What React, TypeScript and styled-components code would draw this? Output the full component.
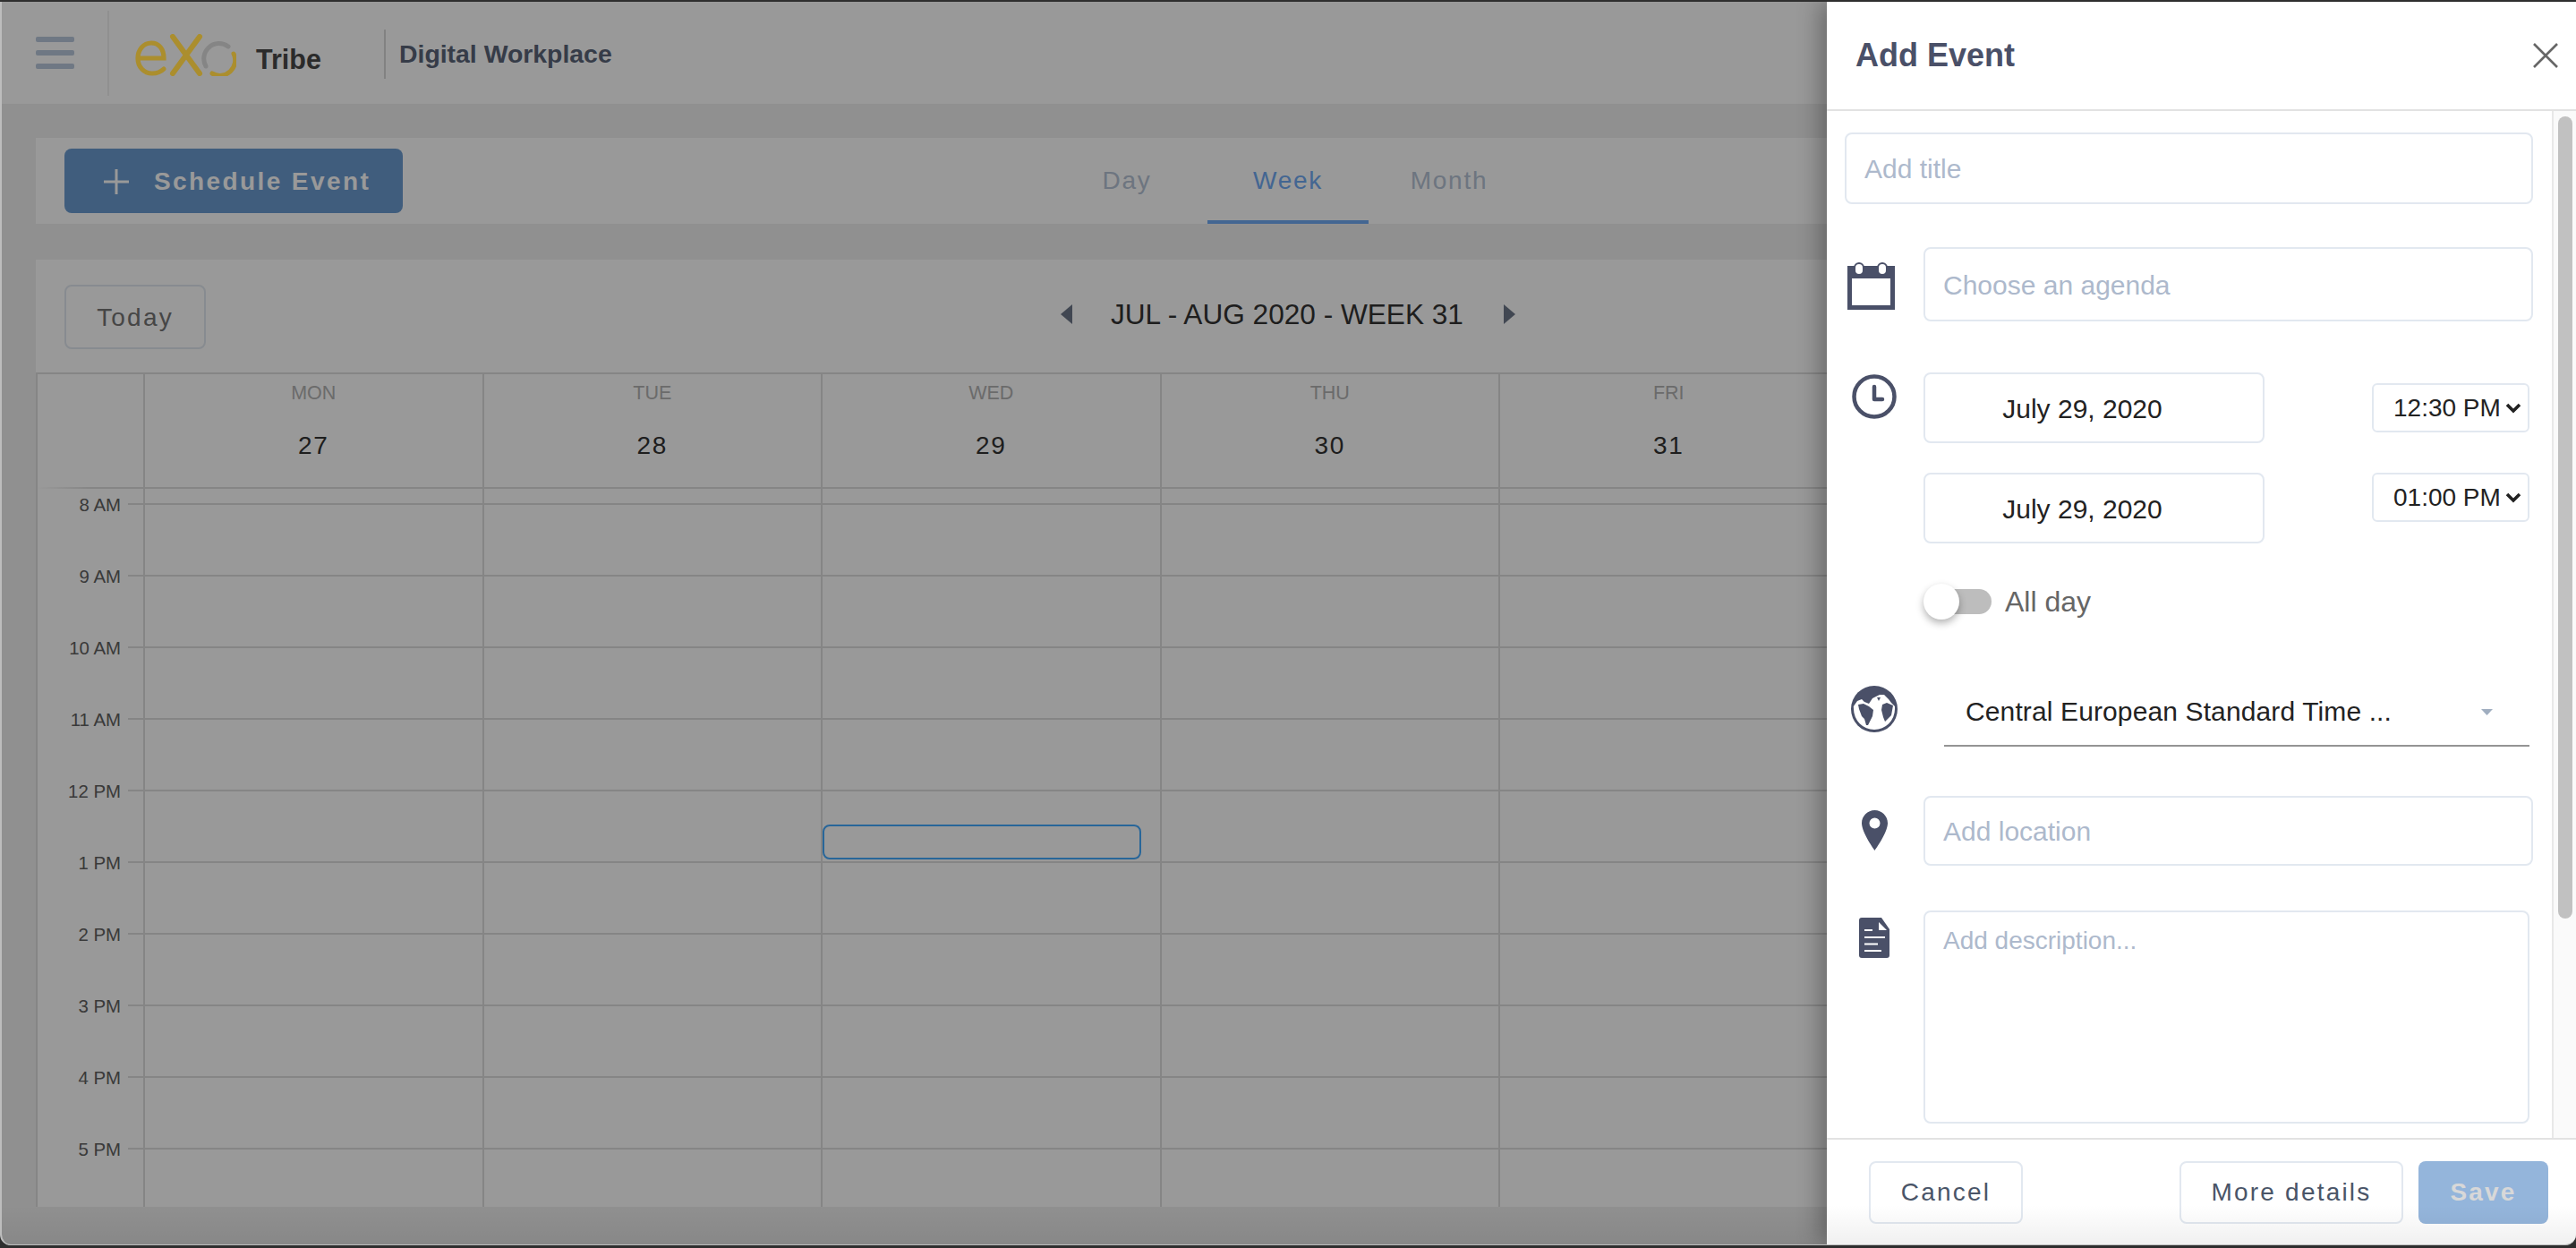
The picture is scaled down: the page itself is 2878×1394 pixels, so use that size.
import styled, { createGlobalStyle } from 'styled-components';

const GlobalStyle = createGlobalStyle`
  html, body {
    margin: 0;
    padding: 0;
    background: #2e2e2e;
    overflow: hidden;
  }
  * {
    box-sizing: border-box;
  }
  body, input, textarea, button {
    font-family: "Liberation Sans", Arial, sans-serif;
  }
`;

const Screen = styled.div`
  width: 2878px;
  height: 1394px;
  padding-top: 2px;
`;

const Window = styled.div`
  position: relative;
  width: 2878px;
  height: 1389px;
  background: #f1f1f1;
  border-left: 2px solid #bdbdbd;
  border-bottom: 1px solid #bdbdbd;
  border-radius: 0 0 12px 12px;
  overflow: hidden;
`;

const Overlay = styled.div`
  position: absolute;
  inset: 0;
  z-index: 1;
  background: rgba(0, 0, 0, 0.4);
`;

const BottomShade = styled.div`
  position: absolute;
  left: 0;
  right: 0;
  bottom: 0;
  height: 44px;
  z-index: 4;
  pointer-events: none;
  background: linear-gradient(to bottom, rgba(0, 0, 0, 0), rgba(0, 0, 0, 0.06));
`;

/* top bar */
const TopBar = styled.header`
  height: 114px;
  background: #fff;
  display: flex;
  align-items: center;
`;

const Burger = styled.div`
  width: 120px;
  height: 95px;
  padding-left: 38px;
  border-right: 2px solid #f0f0f0;
  display: flex;
  flex-direction: column;
  justify-content: center;
  gap: 9px;
`;

const BurgerBar = styled.span`
  width: 43px;
  height: 6px;
  border-radius: 2px;
  background: #bac9dc;
`;

const Logo = styled.svg`
  position: relative;
  z-index: 2;
  width: 114px;
  height: 47px;
  margin: 4px 0 0 28px;
`;

const Tribe = styled.span`
  margin: 14px 0 0 22px;
  width: 143px;
  font-size: 30.5px;
  font-weight: 700;
  color: #484848;
`;

const BrandName = styled.div`
  height: 55px;
  margin-top: 2px;
  padding-left: 15px;
  border-left: 2px solid #d9d9d9;
  display: flex;
  align-items: center;
  font-size: 28.4px;
  font-weight: 700;
  color: #5a6479;
`;

/* page under the drawer */
const Main = styled.main`
  width: 2836px;
  margin-left: 38px;
  padding-top: 38px;
`;

const ViewBar = styled.section`
  position: relative;
  width: 2798px;
  height: 96px;
  background: #fff;
  padding: 12px 32px;
  display: grid;
  grid-template-columns: 1fr auto 1fr;
`;

const ScheduleButton = styled.button`
  width: 378px;
  height: 72px;
  border: 0;
  border-radius: 8px;
  background: #6b9bd0;
  color: #fff;
  font-size: 28px;
  font-weight: 700;
  letter-spacing: 2.4px;
  padding: 2px 0 0 44px;
  display: flex;
  align-items: center;
  gap: 28px;
`;

const Tabs = styled.nav`
  display: flex;
  margin-top: -12px;
`;

const Tab = styled.div<{ $active?: boolean }>`
  width: 180px;
  height: 96px;
  padding-top: 4px;
  display: flex;
  align-items: center;
  justify-content: center;
  font-size: 28px;
  letter-spacing: 1.7px;
  color: ${(p) => (p.$active ? '#71aaf3' : '#b6c3d5')};
  border-bottom: 4px solid ${(p) => (p.$active ? '#71aaf3' : 'transparent')};
`;

const CalendarCard = styled.section`
  width: 2798px;
  height: 1058px;
  margin-top: 40px;
  background: #fff;
  overflow: hidden;
`;

const CalendarHead = styled.div`
  height: 128px;
  padding: 28px 32px 0;
  display: grid;
  grid-template-columns: 1fr auto 1fr;
  border-bottom: 2px solid #dedede;
`;

const TodayButton = styled.button`
  width: 158px;
  height: 72px;
  padding: 2px 0 0;
  border: 2px solid #e2e8f0;
  border-radius: 8px;
  background: #fff;
  color: #757575;
  font-size: 28px;
  letter-spacing: 2.2px;
`;

const WeekNav = styled.div`
  height: 64px;
  padding-top: 2px;
  display: flex;
  align-items: center;
  gap: 42px;
  font-size: 31.6px;
  color: #333;
`;

const WeekTitle = styled.span`
  width: 396px;
  white-space: nowrap;
`;

const GridFrame = styled.div`
  border-left: 2px solid #dedede;
`;

const DayHead = styled.div`
  height: 128px;
  display: grid;
  grid-template-columns: 118px repeat(7, 378.5px);
  border-bottom: 2px solid;
  border-image: linear-gradient(to right, transparent, #dedede 60px) 1;
`;

const DayHeadCell = styled.div`
  border-left: 2px solid #dedede;
  display: flex;
  flex-direction: column;
  align-items: center;
  padding-top: 8px;
`;

const DayName = styled.span`
  font-size: 21.5px;
  line-height: 26px;
  color: #b2b2b2;
`;

const DayNumber = styled.span`
  margin-top: 28px;
  font-size: 28px;
  line-height: 36px;
  letter-spacing: 1.6px;
  color: #333;
`;

const GridBody = styled.div`
  display: flex;
`;

const TimeAxis = styled.div`
  width: 118px;
  flex: none;
  padding-top: 16px;
`;

const HourSlot = styled.div`
  height: 80px;
  display: flex;
  justify-content: flex-end;
  align-items: flex-start;
  gap: 8px;
`;

const HourLabel = styled.span`
  margin-top: -10px;
  font-size: 20.4px;
  line-height: 24px;
  color: #616161;
`;

const HourTick = styled.span`
  width: 17px;
  height: 2px;
  background: #dedede;
`;

const Hours = styled.div`
  flex: none;
`;

const TopSpacer = styled.div`
  height: 16px;
  display: grid;
  grid-template-columns: repeat(7, 378.5px);
`;

const HourRow = styled.div`
  height: 80px;
  display: grid;
  grid-template-columns: repeat(7, 378.5px);
  border-top: 2px solid #dedede;
`;

const HourCell = styled.div`
  position: relative;
  border-left: 2px solid #dedede;
`;

const DraftEvent = styled.div`
  position: absolute;
  top: 37px;
  left: 0;
  width: 356px;
  height: 39px;
  border: 2px solid #43aaff;
  border-radius: 8px;
`;

/* drawer */
const Drawer = styled.aside`
  position: absolute;
  top: 0;
  right: 0;
  bottom: 0;
  width: 837px;
  z-index: 3;
  background: #fff;
  box-shadow: -8px 0 24px rgba(0, 0, 0, 0.3);
  display: flex;
  flex-direction: column;
`;

const DrawerHead = styled.div`
  height: 122px;
  flex: none;
  padding: 0 20px 0 32px;
  border-bottom: 2px solid #e2e2e2;
  display: flex;
  align-items: center;
  justify-content: space-between;
`;

const DrawerTitle = styled.h2`
  margin: 0;
  font-size: 36px;
  font-weight: 700;
  color: #4a5068;
`;

const DrawerBody = styled.div`
  flex: 1;
  min-height: 0;
  display: flex;
`;

const Form = styled.div`
  width: 810px;
  padding: 24px 21px 0 20px;
  overflow: hidden;
`;

const ScrollTrack = styled.div`
  flex: 1;
  background: #fafafa;
  border-left: 2px solid #e8e8e8;
  padding: 6px 0 0 5px;
`;

const ScrollThumb = styled.div`
  width: 16px;
  height: 896px;
  border-radius: 8px;
  background: #c1c1c1;
`;

const Row = styled.div<{ $after: number }>`
  display: flex;
  align-items: flex-start;
  margin-bottom: ${(p) => p.$after}px;
`;

const IconCell = styled.div<{ $top: number }>`
  width: 66px;
  margin-right: 22px;
  padding-top: ${(p) => p.$top}px;
  flex: none;
  display: flex;
  justify-content: center;
  color: #4a5068;
`;

const CalendarSvg = styled.svg`
  margin-left: -7px;
`;

const Control = styled.div`
  flex: 1;
  min-width: 0;
`;

const TextField = styled.input<{ $h: number; $center?: boolean }>`
  display: block;
  width: 100%;
  height: ${(p) => p.$h}px;
  padding: ${(p) => (p.$center ? '2px 26px 0 0' : '2px 0 0 20px')};
  border: 2px solid #e2e8f0;
  border-radius: 8px;
  outline: none;
  background: #fff;
  font-size: 30px;
  color: #222;
  text-align: ${(p) => (p.$center ? 'center' : 'left')};
  &::placeholder {
    color: #adb9cc;
    opacity: 1;
  }
`;

const Description = styled.textarea`
  display: block;
  width: 677px;
  height: 238px;
  padding: 16px 20px;
  border: 2px solid #e2e8f0;
  border-radius: 8px;
  outline: none;
  resize: none;
  font-size: 28px;
  &::placeholder {
    color: #adb9cc;
    opacity: 1;
  }
`;

const DateLine = styled.div<{ $selectTop: number }>`
  display: flex;
  justify-content: space-between;
  align-items: flex-start;
  padding-right: 4px;
  margin-bottom: 33px;
  & > div {
    margin-top: ${(p) => p.$selectTop}px;
  }
`;

const DateBox = styled.span`
  width: 381px;
  flex: none;
`;

const TimeSelect = styled.div`
  width: 176px;
  height: 55px;
  padding: 0 7px 0 22px;
  border: 2px solid #e2e8f0;
  border-radius: 6px;
  display: flex;
  align-items: center;
  justify-content: space-between;
  font-size: 28px;
  color: #222;
`;

const ToggleLine = styled.div`
  height: 40px;
  margin-top: 45px;
  display: flex;
  align-items: center;
  gap: 15px;
  font-size: 32px;
  color: #666;
`;

const Toggle = styled.div`
  position: relative;
  width: 76px;
  height: 40px;
  display: flex;
  align-items: center;
  justify-content: flex-end;
`;

const ToggleTrack = styled.span`
  width: 62px;
  height: 28px;
  border-radius: 14px;
  background: #bdbdbd;
`;

const ToggleKnob = styled.span`
  position: absolute;
  left: 0;
  top: 0;
  width: 40px;
  height: 40px;
  border-radius: 50%;
  background: #fff;
  box-shadow: 0 4px 8px rgba(0, 0, 0, 0.3);
`;

const ZoneSelect = styled.div`
  height: 68px;
  margin: 0 4px 0 23px;
  padding: 0 41px 8px 24px;
  border-bottom: 2px solid #949494;
  display: flex;
  align-items: center;
  justify-content: space-between;
  font-size: 30px;
  letter-spacing: 0.12px;
  color: #222;
`;

const DrawerFoot = styled.div`
  height: 119px;
  flex: none;
  padding: 24px 31px 0 47px;
  border-top: 2px solid #e2e2e2;
  display: flex;
  justify-content: space-between;
`;

const FootGroup = styled.div`
  display: flex;
  gap: 17px;
`;

const FootButton = styled.button<{ $w: number }>`
  width: ${(p) => p.$w}px;
  height: 70px;
  border: 2px solid #e2e8f0;
  border-radius: 8px;
  background: #fff;
  color: #4a5568;
  font-size: 28px;
  letter-spacing: 2.2px;
`;

const SaveButton = styled.button`
  width: 145px;
  height: 70px;
  border: 0;
  border-radius: 8px;
  background: #94b5db;
  color: #d8d8d8;
  font-size: 28px;
  font-weight: 700;
  letter-spacing: 2.2px;
`;

const days = [
  { name: 'MON', date: '27' },
  { name: 'TUE', date: '28' },
  { name: 'WED', date: '29' },
  { name: 'THU', date: '30' },
  { name: 'FRI', date: '31' },
  { name: 'SAT', date: '1' },
  { name: 'SUN', date: '2' },
];

const hours = ['8 AM', '9 AM', '10 AM', '11 AM', '12 PM', '1 PM', '2 PM', '3 PM', '4 PM', '5 PM'];

const CalendarIcon = () => (
  <CalendarSvg width="53" height="53" viewBox="0 0 53 53">
    <path fill="currentColor" d="M0 4h53v49H0z" />
    <path fill="#fff" d="M5 18h43v30H5z" />
    <rect x="8" y="1" width="10" height="13" rx="5" fill="#fff" stroke="currentColor" strokeWidth="2" />
    <rect x="34" y="1" width="10" height="13" rx="5" fill="#fff" stroke="currentColor" strokeWidth="2" />
  </CalendarSvg>
);

const ClockIcon = () => (
  <svg width="50" height="50" viewBox="0 0 50 50" fill="none" stroke="currentColor">
    <circle cx="25" cy="25" r="22.5" strokeWidth="4.5" />
    <path d="M25 14v14h9" strokeWidth="4.5" strokeLinecap="round" strokeLinejoin="round" />
  </svg>
);

const GlobeIcon = () => (
  <svg width="52" height="52" viewBox="0 0 52 52">
    <circle cx="26" cy="26" r="26" fill="currentColor" />
    <path
      fill="#fff"
      d="M2.800 23 7 17 12 15 15 18 20 20 24 14 32 10 37 10 42 15 45 19 49 23 49 26A23 23 0 0 1 3 26Z"
    />
    <path
      fill="currentColor"
      d="M8 21 14 20 20 23 25 27 24 34 19 44 17 44 15 37 12 34 9 26ZM35 21 40 19 47 22 45 33 38 40 36 35 34 27ZM29 13 33 13 31 17Z"
    />
  </svg>
);

const PinIcon = () => (
  <svg width="29" height="45" viewBox="0 0 29 45">
    <path
      fill="currentColor"
      fillRule="evenodd"
      d="M14.500 0C6.500 0 0 6.500 0 14.500 0 25 14.500 45 14.500 45S29 25 29 14.500C29 6.500 22.500 0 14.500 0ZM14.500 8.500A6 6 0 1 1 14.500 20.500 6 6 0 1 1 14.500 8.500Z"
    />
  </svg>
);

const FileIcon = () => (
  <svg width="34" height="45" viewBox="0 0 34 45">
    <path fill="currentColor" d="M3 0H25L34 13V42A3 3 0 0 1 31 45H3A3 3 0 0 1 0 42V3A3 3 0 0 1 3 0Z" />
    <path fill="#fff" d="M22 5V14H31Z" />
    <path stroke="#fff" strokeWidth="2" d="M6 14H15M6 22H29M6 29.500H21M6 37H25" />
  </svg>
);

const Chevron = () => (
  <svg width="18" height="12" viewBox="0 0 18 12" fill="none">
    <path d="M2 2l7 7 7-7" stroke="#222" strokeWidth="3.6" />
  </svg>
);

const App = () => {
  return (
    <Screen>
      <GlobalStyle />
      <Window>
        <TopBar>
          <Burger>
            <BurgerBar />
            <BurgerBar />
            <BurgerBar />
          </Burger>
          <Logo viewBox="0 0 114 47" fill="none" strokeLinecap="round">
            <path
              d="M4 27H33C33 16 27 10 19 10 10 10 4 18 4 27 4 37 11 44 20 44 26 44 30 42 33 39"
              stroke="#ab8e2e"
              strokeWidth="5.2"
            />
            <path d="M43 3 73 44M73 3 43 44" stroke="#ab8e2e" strokeWidth="6" />
            <path d="M80 36A17 17 0 0 1 105 14" stroke="#858585" strokeWidth="5" />
            <path d="M111 22A17 17 0 0 1 87 44" stroke="#ab8e2e" strokeWidth="5" />
          </Logo>
          <Tribe>Tribe</Tribe>
          <BrandName>Digital Workplace</BrandName>
        </TopBar>

        <Main>
          <ViewBar>
            <ScheduleButton>
              <svg width="28" height="28" viewBox="0 0 28 28">
                <path d="M14 0v28M0 14h28" stroke="#fff" strokeWidth="3" />
              </svg>
              Schedule Event
            </ScheduleButton>
            <Tabs>
              <Tab>Day</Tab>
              <Tab $active>Week</Tab>
              <Tab>Month</Tab>
            </Tabs>
          </ViewBar>

          <CalendarCard>
            <CalendarHead>
              <div>
                <TodayButton>Today</TodayButton>
              </div>
              <WeekNav>
                <svg width="14" height="22" viewBox="0 0 14 22">
                  <path d="M13 0v22L0 11z" fill="#6d7789" />
                </svg>
                <WeekTitle>JUL - AUG 2020 - WEEK 31</WeekTitle>
                <svg width="14" height="22" viewBox="0 0 14 22">
                  <path d="M1 0v22l13-11z" fill="#6d7789" />
                </svg>
              </WeekNav>
              <div />
            </CalendarHead>

            <GridFrame>
              <DayHead>
                <div />
                {days.map((d) => (
                  <DayHeadCell key={d.name}>
                    <DayName>{d.name}</DayName>
                    <DayNumber>{d.date}</DayNumber>
                  </DayHeadCell>
                ))}
              </DayHead>
              <GridBody>
                <TimeAxis>
                  {hours.map((h) => (
                    <HourSlot key={h}>
                      <HourLabel>{h}</HourLabel>
                      <HourTick />
                    </HourSlot>
                  ))}
                </TimeAxis>
                <Hours>
                  <TopSpacer>
                    {days.map((d) => (
                      <HourCell key={d.name} />
                    ))}
                  </TopSpacer>
                  {hours.map((h) => (
                    <HourRow key={h}>
                      {days.map((d) => (
                        <HourCell key={d.name}>
                          {h === '12 PM' && d.name === 'WED' && <DraftEvent />}
                        </HourCell>
                      ))}
                    </HourRow>
                  ))}
                </Hours>
              </GridBody>
            </GridFrame>
          </CalendarCard>
        </Main>

        <Overlay />

        <Drawer>
          <DrawerHead>
            <DrawerTitle>Add Event</DrawerTitle>
            <svg width="28" height="28" viewBox="0 0 28 28">
              <path d="M1 1l26 26M27 1L1 27" stroke="#666" strokeWidth="2.6" />
            </svg>
          </DrawerHead>

          <DrawerBody>
            <Form>
              <Row $after={48}>
                <TextField $h={80} placeholder="Add title" />
              </Row>

              <Row $after={57}>
                <IconCell $top={17}>
                  <CalendarIcon />
                </IconCell>
                <Control>
                  <TextField $h={83} placeholder="Choose an agenda" />
                </Control>
              </Row>

              <Row $after={74}>
                <IconCell $top={2}>
                  <ClockIcon />
                </IconCell>
                <Control>
                  <DateLine $selectTop={12}>
                    <DateBox>
                      <TextField $h={79} $center readOnly value="July 29, 2020" />
                    </DateBox>
                    <TimeSelect>
                      12:30 PM
                      <Chevron />
                    </TimeSelect>
                  </DateLine>
                  <DateLine $selectTop={0}>
                    <DateBox>
                      <TextField $h={79} $center readOnly value="July 29, 2020" />
                    </DateBox>
                    <TimeSelect>
                      01:00 PM
                      <Chevron />
                    </TimeSelect>
                  </DateLine>
                  <ToggleLine>
                    <Toggle>
                      <ToggleTrack />
                      <ToggleKnob />
                    </Toggle>
                    All day
                  </ToggleLine>
                </Control>
              </Row>

              <Row $after={55}>
                <IconCell $top={0}>
                  <GlobeIcon />
                </IconCell>
                <Control>
                  <ZoneSelect>
                    Central European Standard Time ...
                    <svg width="13" height="7" viewBox="0 0 13 7">
                      <path d="M0 0h13L6.500 7z" fill="#a0aec0" />
                    </svg>
                  </ZoneSelect>
                </Control>
              </Row>

              <Row $after={50}>
                <IconCell $top={16}>
                  <PinIcon />
                </IconCell>
                <Control>
                  <TextField $h={78} placeholder="Add location" />
                </Control>
              </Row>

              <Row $after={0}>
                <IconCell $top={8}>
                  <FileIcon />
                </IconCell>
                <Control>
                  <Description placeholder="Add description..." />
                </Control>
              </Row>
            </Form>
            <ScrollTrack>
              <ScrollThumb />
            </ScrollTrack>
          </DrawerBody>

          <DrawerFoot>
            <FootButton $w={172}>Cancel</FootButton>
            <FootGroup>
              <FootButton $w={250}>More details</FootButton>
              <SaveButton>Save</SaveButton>
            </FootGroup>
          </DrawerFoot>
        </Drawer>

        <BottomShade />
      </Window>
    </Screen>
  );
};

export default App;
